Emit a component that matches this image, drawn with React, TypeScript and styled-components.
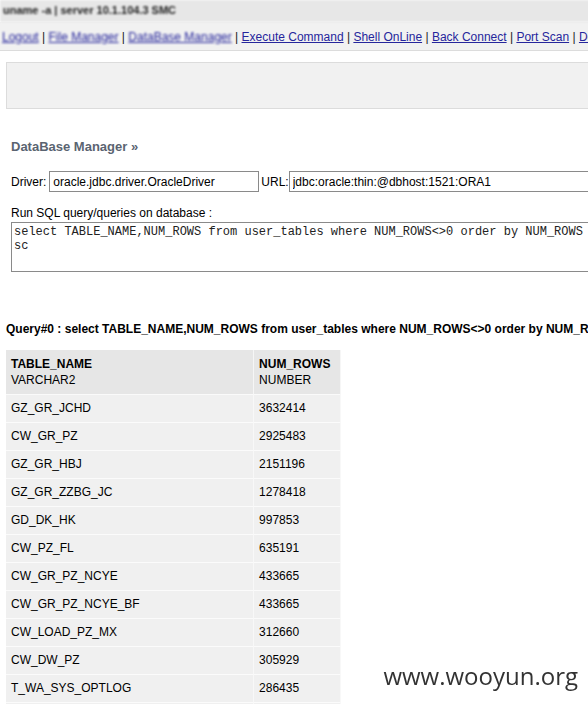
import styled, { createGlobalStyle } from "styled-components";

const GlobalStyle = createGlobalStyle`
  html, body {
    margin: 0;
    padding: 0;
    background: #fff;
    overflow: hidden;
  }
  body {
    font-family: "Liberation Sans", Arial, sans-serif;
    font-size: 12px;
    color: #000;
  }
`;

const Page = styled.div`
  position: relative;
  width: 900px;
  min-height: 704px;
`;

const TopBar = styled.div`
  height: 22px;
  line-height: 20px;
  padding-left: 3px;
  background: #e7e7e7;
  color: #222;
  font-size: 11px;
  font-weight: bold;
  white-space: nowrap;
  filter: blur(0.9px);
`;

const Nav = styled.nav`
  height: 28px;
  line-height: 30px;
  padding-left: 2px;
  background: #f1f1f1;
  border-bottom: 1px solid #dcdcdc;
  font-size: 12px;
  white-space: nowrap;
  color: #222;
`;

const NavLink = styled.a<{ $masked?: boolean }>`
  color: #26269c;
  text-decoration: underline;
  filter: ${(p) => (p.$masked ? "blur(0.9px)" : "none")};
`;

const Content = styled.div`
  padding: 0 6px;
`;

const InfoBox = styled.div`
  margin-top: 11px;
  height: 45px;
  background: #f1f1f1;
  border: 1px solid #dcdcdc;
`;

const Section = styled.div`
  padding: 0 5px;
`;

const Heading = styled.h2`
  margin: 30px 0 0;
  font-size: 13px;
  line-height: 16px;
  font-weight: bold;
  color: #5a6471;
`;

const FormRow = styled.div`
  margin-top: 16px;
  display: flex;
  align-items: center;
  white-space: nowrap;
`;

const Label = styled.span`
  font-size: 12px;
`;

const TextInput = styled.input<{ $width: number }>`
  box-sizing: border-box;
  width: ${(p) => p.$width}px;
  height: 21px;
  margin: 0 2px 0 3px;
  padding: 0 3px;
  border: 1px solid #8a8a8a;
  font-family: "Liberation Sans", Arial, sans-serif;
  font-size: 12px;
  color: #000;
  background: #fff;
`;

const UrlInput = styled(TextInput)`
  margin-left: 0;
`;

const QueryLabel = styled.div`
  margin-top: 13px;
  line-height: 16px;
`;

const QueryArea = styled.textarea`
  display: block;
  box-sizing: border-box;
  margin-top: 1px;
  width: 600px;
  height: 50px;
  padding: 2px 2px;
  border: 1px solid #8a8a8a;
  font-family: "Liberation Mono", "Courier New", monospace;
  font-size: 12px;
  line-height: 14px;
  color: #222;
  resize: none;
  word-break: break-all;
  overflow: hidden;
`;

const QueryTitle = styled.div`
  margin-top: 49px;
  font-weight: bold;
  line-height: 16px;
  white-space: nowrap;
`;

const ResultTable = styled.table`
  margin-top: 13px;
  border-collapse: separate;
  border-spacing: 0;
  width: 335px;
`;

const HeadCell = styled.th<{ $width: number }>`
  width: ${(p) => p.$width}px;
  text-align: left;
  vertical-align: top;
  padding: 6px 5px;
  background: #e6e6e6;
  border-bottom: 1px solid #fafafa;
  border-right: 1px solid #f6f6f6;
  line-height: 16px;
  font-weight: normal;
`;

const ColName = styled.div`
  font-weight: bold;
`;

const Cell = styled.td`
  padding: 5px 5px 6px;
  background: #f0f0f0;
  border-bottom: 1px solid #fbfbfb;
  border-right: 1px solid #f8f8f8;
  line-height: 16px;
`;

const Watermark = styled.div`
  position: fixed;
  right: 10px;
  top: 660px;
  font-family: "Open Sans", "DejaVu Sans", sans-serif;
  font-size: 24px;
  line-height: 32px;
  color: #333;
`;

const links = [
  { label: "Logout", masked: true },
  { label: "File Manager", masked: true },
  { label: "DataBase Manager", masked: true },
  { label: "Execute Command" },
  { label: "Shell OnLine" },
  { label: "Back Connect" },
  { label: "Port Scan" },
  { label: "Domain Info" },
];

const rows: [string, string][] = [
  ["GZ_GR_JCHD", "3632414"],
  ["CW_GR_PZ", "2925483"],
  ["GZ_GR_HBJ", "2151196"],
  ["GZ_GR_ZZBG_JC", "1278418"],
  ["GD_DK_HK", "997853"],
  ["CW_PZ_FL", "635191"],
  ["CW_GR_PZ_NCYE", "433665"],
  ["CW_GR_PZ_NCYE_BF", "433665"],
  ["CW_LOAD_PZ_MX", "312660"],
  ["CW_DW_PZ", "305929"],
  ["T_WA_SYS_OPTLOG", "286435"],
  ["CW_GR_MX", "264108"],
];

const sql =
  "select TABLE_NAME,NUM_ROWS from user_tables where NUM_ROWS<>0 order by NUM_ROWS desc";

export default function App() {
  return (
    <Page>
      <GlobalStyle />
      <TopBar>uname -a | server 10.1.104.3 SMC</TopBar>
      <Nav>
        {links.map((l, i) => (
          <span key={l.label}>
            {i > 0 && " | "}
            <NavLink href="#" $masked={l.masked}>
              {l.label}
            </NavLink>
          </span>
        ))}
      </Nav>
      <Content>
        <InfoBox />
        <Section>
          <Heading>DataBase Manager »</Heading>
          <FormRow>
            <Label>Driver:</Label>
            <TextInput $width={210} defaultValue="oracle.jdbc.driver.OracleDriver" />
            <Label>URL:</Label>
            <UrlInput $width={400} defaultValue="jdbc:oracle:thin:@dbhost:1521:ORA1" />
          </FormRow>
          <QueryLabel>Run SQL query/queries on database :</QueryLabel>
          <QueryArea defaultValue={sql} />
        </Section>
        <QueryTitle>Query#0 : {sql}</QueryTitle>
        <ResultTable>
          <thead>
            <tr>
              <HeadCell $width={239}>
                <ColName>TABLE_NAME</ColName>
                VARCHAR2
              </HeadCell>
              <HeadCell $width={76}>
                <ColName>NUM_ROWS</ColName>
                NUMBER
              </HeadCell>
            </tr>
          </thead>
          <tbody>
            {rows.map(([name, count]) => (
              <tr key={name}>
                <Cell>{name}</Cell>
                <Cell>{count}</Cell>
              </tr>
            ))}
          </tbody>
        </ResultTable>
      </Content>
      <Watermark>www.wooyun.org</Watermark>
    </Page>
  );
}
